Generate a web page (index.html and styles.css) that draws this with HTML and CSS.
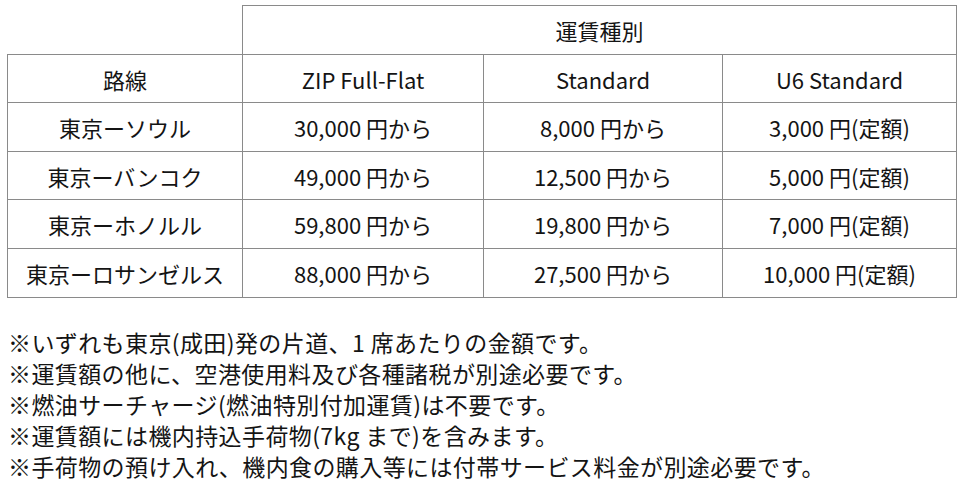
FILE: index.html
```html
<!DOCTYPE html>
<html lang="ja">
<head>
<meta charset="utf-8">
<link rel="stylesheet" href="styles.css">
</head>
<body>
<div class="page">
  <table class="fares">
    <colgroup>
      <col class="c1"><col class="c2"><col class="c3"><col class="c4">
    </colgroup>
    <tr class="tall">
      <td class="blank"></td>
      <td colspan="3">運賃種別</td>
    </tr>
    <tr>
      <td>路線</td>
      <td>ZIP Full-Flat</td>
      <td>Standard</td>
      <td>U6 Standard</td>
    </tr>
    <tr class="tall">
      <td>東京ーソウル</td>
      <td>30,000 円から</td>
      <td>8,000 円から</td>
      <td>3,000 円(定額)</td>
    </tr>
    <tr>
      <td>東京ーバンコク</td>
      <td>49,000 円から</td>
      <td>12,500 円から</td>
      <td>5,000 円(定額)</td>
    </tr>
    <tr class="tall">
      <td>東京ーホノルル</td>
      <td>59,800 円から</td>
      <td>19,800 円から</td>
      <td>7,000 円(定額)</td>
    </tr>
    <tr class="tall">
      <td>東京ーロサンゼルス</td>
      <td>88,000 円から</td>
      <td>27,500 円から</td>
      <td>10,000 円(定額)</td>
    </tr>
  </table>
  <div class="notes">
    <p>※いずれも東京(成田)発の片道、1 席あたりの金額です。</p>
    <p>※運賃額の他に、空港使用料及び各種諸税が別途必要です。</p>
    <p>※燃油サーチャージ(燃油特別付加運賃)は不要です。</p>
    <p>※運賃額には機内持込手荷物(7kg まで)を含みます。</p>
    <p>※手荷物の預け入れ、機内食の購入等には付帯サービス料金が別途必要です。</p>
  </div>
</div>
</body>
</html>
```

FILE: styles.css
```css
html, body {
  margin: 0;
  padding: 0;
  background: #ffffff;
}
body {
  font-family: "Noto Sans CJK JP", "Noto Sans", sans-serif;
  color: #141414;
  font-size: 22px;
}
.page {
  padding: 5px 0 0 7px;
}
.fares {
  border-collapse: collapse;
  table-layout: fixed;
  width: 949px;
}
.c1 { width: 235px; }
.c2 { width: 241px; }
.c3 { width: 239px; }
.c4 { width: 234px; }
.fares td {
  border: 1px solid #8a8a8a;
  text-align: center;
  vertical-align: middle;
  height: 47px;
  padding: 0;
  line-height: 26px;
}
.fares tr.tall td {
  height: 48px;
}
.fares td.blank {
  border-top: none;
  border-left: none;
}
.notes {
  margin-top: 29px;
  margin-left: 1px;
}
.notes p {
  margin: 0;
  font-size: 23px;
  line-height: 31px;
  letter-spacing: 0.4px;
  white-space: nowrap;
}
```
